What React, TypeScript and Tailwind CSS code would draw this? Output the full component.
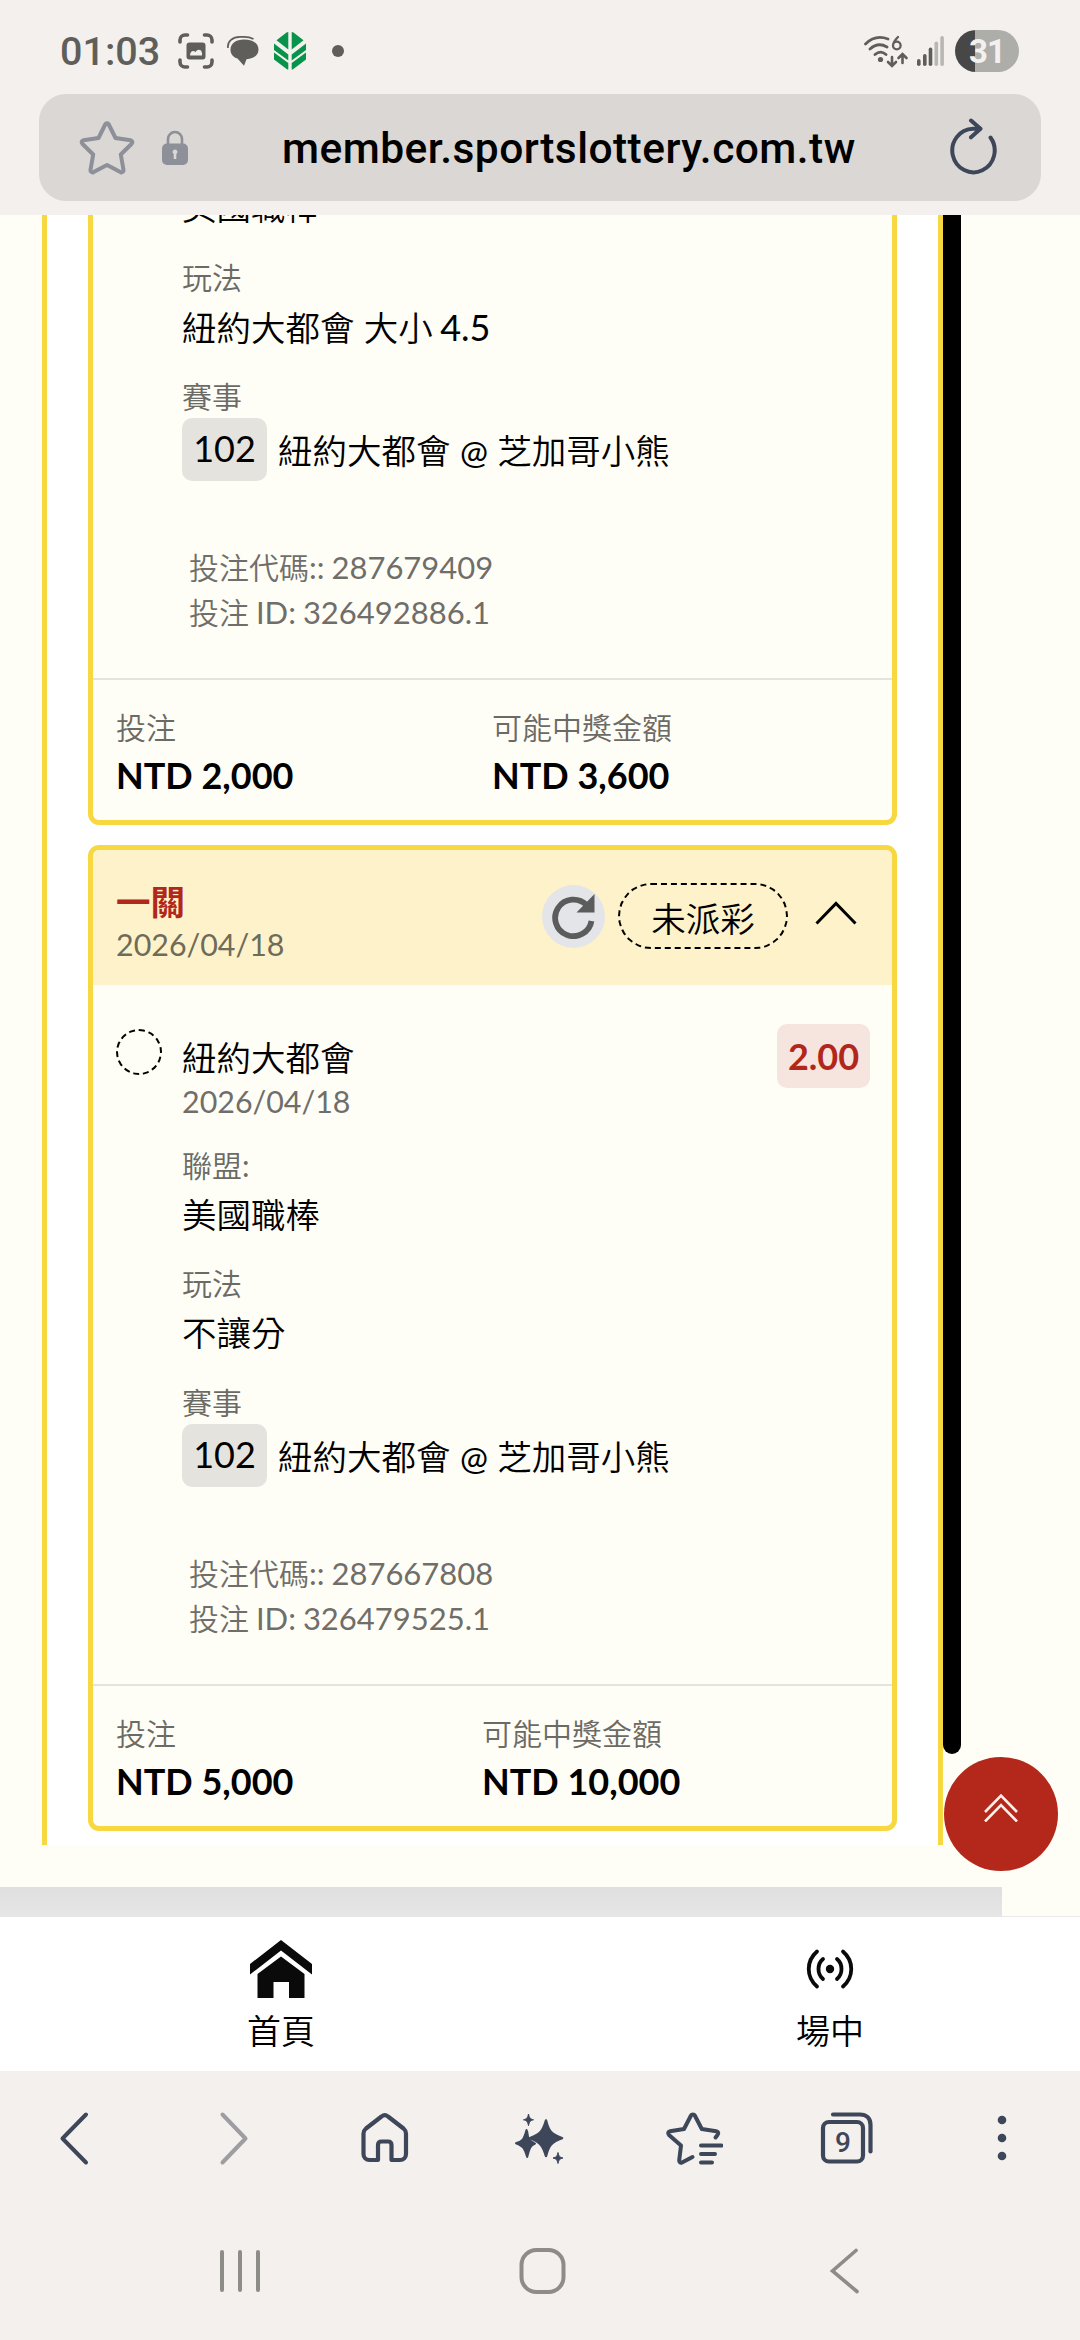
import React from 'react'

const ink = '#3d4759'

const StatusBar: React.FC = () => (
    <div className="flex h-[94px] items-start justify-between pl-[60px] pr-[61px] pt-[30px] font-['Roboto','Liberation_Sans',sans-serif] text-[#5f5e5b]">
        <div className="flex h-[42px] items-center">
            <span className="w-[118px] whitespace-nowrap pt-[2px] text-[39.5px] font-medium leading-[42px]">01:03</span>
            <svg className="h-[36px] w-[36px]" viewBox="0 0 36 36" fill="none" stroke="currentColor" strokeWidth="3.600" strokeLinecap="round">
                <path d="M2 9V7a5 5 0 0 1 5-5h2.500M26.500 2H29a5 5 0 0 1 5 5v2M34 27v2a5 5 0 0 1-5 5h-2.500M9.500 34H7a5 5 0 0 1-5-5v-2" />
                <rect x="8.500" y="9.500" width="19" height="17" rx="3" fill="currentColor" stroke="none" />
                <path d="M12 22.500c0-4 3-6 5.500-3.500 2-3.500 6-3 6.500 1v2.500z" fill="#f3f0ed" stroke="none" />
            </svg>
            <svg className="ml-[13px] h-[30px] w-[32px]" viewBox="0 0 32 30" fill="currentColor">
                <path d="M17 3.500c9 0 14.500 4 14.500 10.200 0 5.300-5 9-12 9.500L17 29.800 10.500 22.500C6 21 3.500 18 3.500 13.700 3.500 7.500 9 3.500 17 3.500z" />
                <path d="M1 12C0 5 6 .9 13 .9h4c4 0 7 .8 9.500 2.200" fill="none" stroke="currentColor" strokeWidth="1.700" />
            </svg>
            <svg className="ml-[15px] h-[38px] w-[32px]" viewBox="0 0 32 38" fill="#08934a">
                <path d="M12.500.5 14.300 0v17.500L2.500 8.200zM0 11.500l14.300 11v6L0 18zM0 20.500l14.300 10.500v6.500h-1L0 27.500z" />
                <path d="M19.500.5 17.700 0v17.500L29.500 8.200zM32 11.500l-14.300 11v6L32 18zM32 20.500 17.700 31v6.500h1L32 27.500z" />
            </svg>
            <span className="ml-[26px] h-[12px] w-[12px] rounded-full bg-[#5f5e5b]" />
        </div>
        <div className="flex h-[42px] items-center">
            <svg className="h-[36px] w-[46px]" viewBox="0 0 46 36" fill="none" stroke="currentColor" strokeWidth="2.800" strokeLinecap="round">
                <path d="M2.500 11C9 4.500 17 3 25 6M7 16c5-4.500 11-5.500 17-2M12 21.500c3.500-3 7.500-3 11 0" />
                <circle cx="17.500" cy="26.500" r="2.600" fill="currentColor" stroke="none" />
                <path d="M29 24v8.500m-4-3.500 4 4 4-4M39.500 30v-8.500m-4 3.500 4-4 4 4" strokeWidth="2.600" />
                <path d="M35 4c-3 3-5 5.500-5 8.500a3.800 3.800 0 1 0 3.800-3.800c-1.500 0-2.500.5-3.300 1.500" strokeWidth="2.300" />
            </svg>
            <svg className="ml-[8px] h-[30px] w-[28px]" viewBox="0 0 28 30" fill="currentColor">
                <rect x="0" y="23" width="3.600" height="7" rx="1.800" />
                <rect x="6" y="18" width="3.600" height="12" rx="1.800" />
                <rect x="11.700" y="11.500" width="3.600" height="18.500" rx="1.800" />
                <rect x="17.500" y="5.500" width="3.600" height="24.500" rx="1.800" fill="#b9b7b4" />
                <rect x="23.300" y="0" width="3.600" height="30" rx="1.800" fill="#b9b7b4" />
            </svg>
            <div className="ml-[10px] flex h-[42px] w-[64px] items-center justify-center overflow-hidden rounded-full bg-[linear-gradient(90deg,#474747_20px,#adadaa_20px)] pt-[2px] text-[33px] font-bold leading-[42px] tracking-[-1px] text-[#f3f1ef]">
                31
            </div>
        </div>
    </div>
)

const AddressBar: React.FC = () => (
    <div className="mx-[39px] mb-[14px] flex h-[107px] items-center rounded-[27px] bg-[#dad7d4] pl-[40px] pr-[42px]">
        <svg className="h-[56px] w-[56px]" viewBox="0 0 56 56" fill="none" stroke="#8d9099" strokeWidth="4" strokeLinejoin="round">
            <path d="M26.200 4.500c.8-1.600 2.800-1.600 3.600 0L36.500 18l15 2.200c1.800.3 2.500 2.400 1.200 3.600L41.800 34.500l2.700 15.400c.3 1.800-1.500 3-3.100 2.200L28 45l-13.400 7.100c-1.600.8-3.400-.4-3.100-2.200l2.700-15.400L3.300 23.800C2 22.600 2.700 20.500 4.500 20.200l15-2.200z" />
        </svg>
        <svg className="ml-[27px] h-[35px] w-[26px]" viewBox="0 0 26 35" fill="none">
            <path d="M6 15V9a7 7 0 0 1 14 0v6" stroke="#8d9099" strokeWidth="2.600" />
            <rect y="13.500" width="26" height="21.500" rx="5" fill="#8d9099" />
            <path d="M13 19.500a2.500 2.500 0 0 1 1.300 4.600V29h-2.600v-4.900A2.500 2.500 0 0 1 13 19.500z" fill="#dad7d4" />
        </svg>
        <span className="ml-[94px] w-[580px] whitespace-nowrap pt-[3px] font-['Roboto','Liberation_Sans',sans-serif] text-[42.5px] font-medium leading-[50px] tracking-[0.45px] text-black">
            member.sportslottery.com.tw
        </span>
        <svg className="ml-auto h-[58px] w-[50px] -translate-y-px" viewBox="0 0 50 58" fill="none" stroke={ink} strokeWidth="4" strokeLinecap="round" strokeLinejoin="round">
            <path d="M41.500 19.500A21.200 21.800 0 1 1 24 10.700h7.500M22 2.500l9.500 8.200-9.500 8.600" />
        </svg>
    </div>
)

const Label: React.FC<{ children: React.ReactNode }> = ({ children }) => (
    <p className="text-[30px] font-[350] leading-[36px] text-[#6b6a65]">{children}</p>
)

const Value: React.FC<{ children: React.ReactNode }> = ({ children }) => (
    <p className="mt-[8px] text-[34.5px] font-[350] leading-[48px] text-black">{children}</p>
)

const Match: React.FC = () => (
    <div className="mt-[4px] flex h-[63px] items-center">
        <span className="flex h-[63px] w-[85px] items-center justify-center rounded-[10px] bg-[#e5e3dd] pb-[3px] text-[36px] leading-[58px]">102</span>
        <span className="ml-[11px] pt-[3px] text-[34.5px] font-[350] leading-[48px]">
            紐約大都會 <span className="text-[33.5px] font-normal">@</span> 芝加哥小熊
        </span>
    </div>
)

const Codes: React.FC<{ code: string; id: string }> = ({ code, id }) => (
    <div className="ml-[7px] mt-[64px] text-[31px] leading-[45px] text-[#6f6e6a] [word-spacing:-1px]">
        <p><span className="text-[30px] font-[350]">投注代碼</span>:: {code}</p>
        <p><span className="text-[30px] font-[350]">投注</span> ID: {id}</p>
    </div>
)

const Totals: React.FC<{ stake: string; payout: string; first: string }> = ({ stake, payout, first }) => (
    <div className="flex h-[142px] border-t-2 border-[#e5e3dd] pl-[23px] pt-[29px]">
        <div className={first}>
            <Label>投注</Label>
            <p className="mt-[8px] text-[36px] font-bold leading-[44px]">{stake}</p>
        </div>
        <div>
            <Label>可能中獎金額</Label>
            <p className="mt-[8px] text-[36px] font-bold leading-[44px]">{payout}</p>
        </div>
    </div>
)

const UpperTicket: React.FC = () => (
    <div className="flex h-[610px] flex-col overflow-hidden rounded-b-[11px] border-x-[5px] border-b-[5px] border-[#f7d840] bg-[#fffef6]">
        <div className="-mt-[40px] flex-1 pl-[89px]">
            <Value>美國職棒</Value>
            <div className="mt-[28px]">
                <Label>玩法</Label>
                <Value>紐約大都會 大小 <span className="-ml-[2px] text-[36px] font-normal">4.5</span></Value>
            </div>
            <div className="mt-[26px]">
                <Label>賽事</Label>
                <Match />
            </div>
            <Codes code="287679409" id="326492886.1" />
        </div>
        <Totals stake="NTD 2,000" payout="NTD 3,600" first="w-[376px]" />
    </div>
)

const LowerTicket: React.FC = () => (
    <div className="mt-[20px] flex h-[986px] flex-col overflow-hidden rounded-[11px] border-[5px] border-[#f7d840] bg-[#fffef6]">
        <div className="flex h-[135px] shrink-0 bg-[#fef2cb] pl-[23px] pt-[31px]">
            <div className="w-[426px]">
                <p className="text-[34.5px] font-bold leading-[42px] text-[#b1271c]">一關</p>
                <p className="text-[30.4px] leading-[42px] text-[#6f6b59]">2026/04/18</p>
            </div>
            <div className="mt-[2px] flex h-[66px] items-center">
                <span className="flex h-[63px] w-[63px] items-center justify-center rounded-full bg-[#e4e5e8]">
                    <svg className="h-[46px] w-[46px]" viewBox="0 0 46 46" fill="none">
                        <path d="M35.500 12A18.300 18.300 0 1 0 40.500 28" stroke="#5c5c5c" strokeWidth="5.800" />
                        <path d="M43.500 1v18.500H25.500z" fill="#5c5c5c" />
                    </svg>
                </span>
                <span className="ml-[13px] flex h-[66px] w-[170px] items-center justify-center rounded-full border-2 border-dashed border-black pt-[6px] text-[34.5px] font-[350] leading-[48px]">未派彩</span>
                <svg className="ml-[27px] h-[24px] w-[42px] -translate-y-[3px]" viewBox="0 0 42 24" fill="none" stroke="black" strokeWidth="3">
                    <path d="M1.500 22.500 21 2.500l19.500 20" />
                </svg>
            </div>
        </div>
        <div className="flex flex-1">
            <div className="w-[89px] pl-[23px] pt-[44px]">
                <div className="h-[46px] w-[46px] rounded-full border-2 border-dashed border-black" />
            </div>
            <div className="flex-1 pt-[51px]">
                <p className="text-[34.5px] font-[350] leading-[44px]">紐約大都會</p>
                <p className="text-[30.4px] leading-[42px] text-[#6f6e6a]">2026/04/18</p>
                <div className="mt-[25px]">
                    <Label>聯盟<span className="font-normal">:</span></Label>
                    <Value>美國職棒</Value>
                </div>
                <div className="mt-[26px]">
                    <Label>玩法</Label>
                    <Value>不讓分</Value>
                </div>
                <div className="mt-[27px]">
                    <Label>賽事</Label>
                    <Match />
                </div>
                <Codes code="287667808" id="326479525.1" />
            </div>
            <div className="mr-[22px] mt-[39px] flex h-[64px] w-[93px] items-center justify-center rounded-[10px] bg-[#f6e5de] text-[36px] font-bold text-[#b1271c]">2.00</div>
        </div>
        <Totals stake="NTD 5,000" payout="NTD 10,000" first="w-[366px]" />
    </div>
)

const SiteTabs: React.FC = () => (
    <div className="flex h-[154px] bg-white text-[34px] font-[350] leading-[44px]">
        <div className="flex w-[562px] flex-col items-center pt-[23px]">
            <svg className="h-[58px] w-[62px]" viewBox="0 0 62 58" fill="#0a0a0a">
                <path d="M31 0 62 24v10.500L31 10.500 0 34.500V24z" />
                <path d="M31 16.500 54.500 34v24H39V42H23.500v16H7.500V34z" />
            </svg>
            <p className="mt-[11px]">首頁</p>
        </div>
        <div className="flex flex-1 flex-col items-center pl-[18px] pt-[23px]">
            <svg className="h-[58px] w-[50px]" viewBox="0 0 50 58" fill="none" stroke="#0a0a0a" strokeWidth="3.800" strokeLinecap="round">
                <circle cx="25" cy="29" r="4.200" fill="#0a0a0a" stroke="none" />
                <path d="M12 11.500C1 21 1 37 12 46.500M38 11.500C49 21 49 37 38 46.500M18 19c-6 5-6 15 0 20M32 19c6 5 6 15 0 20" />
            </svg>
            <p className="mt-[11px]">場中</p>
        </div>
    </div>
)

const BrowserBar: React.FC = () => (
    <div className="flex h-[134px] items-center justify-between pl-[44px] pr-[48px]">
        <svg className="h-[60px] w-[60px]" viewBox="0 0 60 60" fill="none" stroke={ink} strokeWidth="4" strokeLinecap="round" strokeLinejoin="round">
            <path d="M42 6.500 18.500 30.500 42 54.500" />
        </svg>
        <svg className="h-[60px] w-[60px]" viewBox="0 0 60 60" fill="none" stroke="#9d9da2" strokeWidth="4" strokeLinecap="round" strokeLinejoin="round">
            <path d="m23.500 6.500 23 24-23 24" />
        </svg>
        <svg className="h-[60px] w-[60px]" viewBox="0 0 60 60" fill="none" stroke={ink} strokeWidth="4.200" strokeLinejoin="round">
            <path d="M28.500 8.500 13 20.500c-1.500 1.300-2.500 3-2.500 5V46c0 3.500 2.500 6 6 6H25V37c0-2.500 1-3.500 3.500-3.500H35c2.500 0 3.500 1 3.500 3.500v15H47c3.500 0 6-2.500 6-6V25.500c0-2-1-3.700-2.500-5L35 8.500c-2-1.700-4.500-1.700-6.500 0z" />
        </svg>
        <svg className="h-[60px] w-[60px]" viewBox="0 0 60 60" fill={ink} stroke={ink} strokeLinejoin="round">
            <path d="M20.500 6c1 4 1.500 4.800 5 5.800-3.500 1-4 1.800-5 5.800-1-4-1.500-4.800-5-5.800 3.500-1 4-1.800 5-5.800zM50 44.500c1 4 1.500 4.500 5 5.500-3.500 1-4 1.500-5 5.500-1-4-1.500-4.500-5-5.500 3.500-1 4-1.500 5-5.500z" />
            <path d="M18.500 22c1 2 1.300 4 1.500 6.500.5 4 4.500 5.500 7 7-4.500 2-5.500 4-7.800 13.500-3-9.500-3.500-10.500-11.200-13.700 7-2.300 8-4 10.500-13.300z" strokeWidth="2" />
            <path d="M38 12.500c2.500 10 4.500 13.500 16 17.700C42.500 34.500 40.500 38 38 48c-3-10-5-13.500-16-17.800C33 26 35 22.500 38 12.500z" strokeWidth="2.500" />
        </svg>
        <svg className="h-[60px] w-[60px]" viewBox="0 0 60 60" fill="none" stroke={ink} strokeWidth="4" strokeLinecap="round" strokeLinejoin="round">
            <path d="M29.500 49 19 54.500c-1.500.8-3-.3-2.800-2L18 37.500 6 27c-1.500-1.500-.8-3.500 1-3.800l14-2.200 7-13.500c.8-1.500 3-1.500 3.800 0l7 13.500 14.500 2.200c2 .3 2.500 2.300 1.200 3.800l-2 2.500" />
            <path d="M38 37.500h20.500M38 46h14M38 54.500h11" />
        </svg>
        <svg className="h-[60px] w-[60px]" viewBox="0 0 60 60" fill="none" stroke={ink} strokeWidth="4.200" strokeLinecap="round">
            <rect x="6" y="14" width="40" height="39.500" rx="6" />
            <path d="M16 6.500h27c6.500 0 10.500 4 10.500 10.500v26.500" />
            <text x="26" y="43.500" textAnchor="middle" fill={ink} stroke="none" className="font-['Roboto','Liberation_Sans',sans-serif] text-[28px] font-medium">9</text>
        </svg>
        <svg className="h-[60px] w-[60px]" viewBox="0 0 60 60" fill={ink}>
            <circle cx="30" cy="12" r="4.300" />
            <circle cx="30" cy="30" r="4.300" />
            <circle cx="30" cy="48" r="4.300" />
        </svg>
    </div>
)

const SystemNav: React.FC = () => (
    <div className="flex h-[135px] items-center justify-between pb-[3px] pl-[215px] pr-[210px]">
        <svg className="h-[50px] w-[50px]" viewBox="0 0 50 50" stroke="#8e8c87" strokeWidth="4" strokeLinecap="round">
            <path d="M7 6v38M25 6v38M43 6v38" />
        </svg>
        <svg className="h-[50px] w-[50px]" viewBox="0 0 50 50" fill="none" stroke="#8e8c87" strokeWidth="4">
            <rect x="3.500" y="4" width="42" height="42" rx="15" />
        </svg>
        <svg className="h-[50px] w-[50px]" viewBox="0 0 50 50" fill="none" stroke="#8e8c87" strokeWidth="3.600" strokeLinecap="round">
            <path d="M36 4.500 12.500 25 37 45.500" />
        </svg>
    </div>
)

const App: React.FC = () => {
    return (
        <div className="relative h-[2340px] w-[1080px] overflow-hidden bg-[#f3f0ed] font-['Lato','Noto_Sans_CJK_TC',sans-serif] text-black">
            <StatusBar />
            <AddressBar />
            <div className="flex h-[1672px] items-start bg-[#fffef6]">
                <div className="ml-[42px] h-[1630px] w-[901px] border-x-[5px] border-[#f7d840] bg-white px-[41px]">
                    <UpperTicket />
                    <LowerTicket />
                </div>
                <div className="h-[1539px] w-[18px] rounded-b-full bg-black" />
            </div>
            <div className="h-[30px] border-b border-[#ebe9e6] bg-[#fffef6]">
                <div className="h-[30px] w-[1002px] bg-linear-to-b from-[#dfdfdf] to-[#e6e6e6]" />
            </div>
            <SiteTabs />
            <BrowserBar />
            <SystemNav />
            <button className="absolute left-[944px] top-[1757px] flex h-[114px] w-[114px] items-center justify-center rounded-full bg-[#b4271b] pb-[14px]">
                <svg className="h-[30px] w-[36px]" viewBox="0 0 36 30" fill="none" stroke="#fdeee8" strokeWidth="2.600">
                    <path d="M2 20 18 3.500 34 20M2 29.500 18 13l16 16.500" />
                </svg>
            </button>
        </div>
    )
}

export default App
